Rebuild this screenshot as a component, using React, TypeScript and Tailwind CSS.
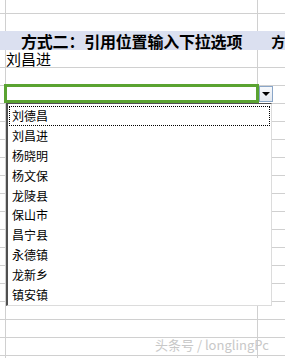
const OPTIONS = ['刘德昌', '刘昌进', '杨晓明', '杨文保', '龙陵县', '保山市', '昌宁县', '永德镇', '龙新乡', '镇安镇'];

const cjk = { fontFamily: '"Noto Sans CJK SC", "Noto Sans", sans-serif' };

function Row({ children, prevBand, h = 'h-[18px]' }: { children?: React.ReactNode; prevBand?: boolean; h?: string }) {
  return (
    <div className={`${h} flex border-b ${prevBand ? 'border-[#dbe0f0]' : 'border-[#d0d0d0]'}`}>
      <div className="w-[6px] shrink-0 border-r border-[#d0d0d0]" />
      <div className="w-[252px] shrink-0 border-r border-[#d0d0d0] flex items-center">{children}</div>
      <div className="flex-1" />
    </div>
  );
}

export default function App() {
  const rest = Array.from({ length: 15 });

  return (
    <div className="relative w-[285px] h-[358px] overflow-hidden bg-white text-black" style={cjk}>
      {/* sheet grid */}
      <Row h="h-[14px]" />
      <Row prevBand />
      {/* header band */}
      <div className="h-[18px] flex items-center gap-[29px] pl-[21px] bg-[#dbe0f0] border-b border-[#dbe0f0] whitespace-nowrap text-[16px] leading-[16px] font-bold">
        <span className="tracking-[-0.2px]">方式二：引用位置输入下拉选项</span>
        <span className="text-[14px]">方</span>
      </div>
      <Row>
        <span className="text-[15px] leading-[15px]">刘昌进</span>
      </Row>
      <Row />
      <Row />
      {rest.map((_, i) => <Row key={i} />)}

      {/* selected cell */}
      <div className="absolute left-[4px] top-[84px] w-[255px] h-[19px] border-[3px] border-[#5aa331]" />
      <div className="absolute left-[255px] top-[100px] w-[4px] h-[4px] bg-[#5aa331]" />

      {/* dropdown button */}
      <div className="absolute left-[259px] top-[86px] w-[14px] h-[16px] border border-[#8aa6c8] bg-gradient-to-b from-[#f7f9fc] to-[#e3e8ef] flex items-center justify-center">
        <div className="w-0 h-0 border-l-[4px] border-r-[4px] border-t-[4px] border-l-transparent border-r-transparent border-t-black" />
      </div>

      {/* dropdown list */}
      <div className="absolute left-[6px] top-[103px] w-[266px] h-[203px] bg-white border-l-2 border-t border-l-[#505050] border-t-[#505050] border-r border-b border-r-[#dcdcdc] border-b-[#dcdcdc] pt-[2px] px-[1px] flex flex-col">
        {OPTIONS.map((o, i) => (
          <div
            key={o}
            className={`h-[20px] flex items-center pl-[2px] text-[12px] leading-none ${i === 0 ? 'border border-dotted border-black' : 'border border-transparent'}`}
          >
            {o}
          </div>
        ))}
      </div>

      {/* watermark */}
      <div
        className="absolute left-[155px] top-[338px] text-[13px] leading-[14px] text-[#c8c8c8] whitespace-nowrap"
        style={{ fontFamily: '"Noto Sans CJK SC", "Liberation Sans", sans-serif' }}
      >
        头条号 / longlingPc
      </div>
    </div>
  );
}
